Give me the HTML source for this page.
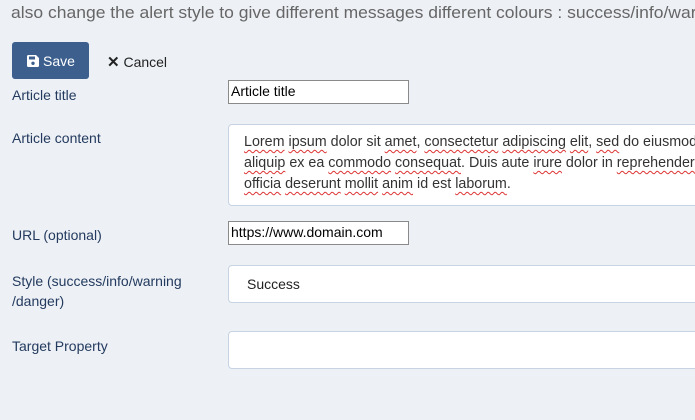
<!DOCTYPE html>
<html><head><style>
body{margin:0;width:695px;height:420px;overflow:hidden;background:#edf1f6;font-family:"Liberation Sans",sans-serif;position:relative}
.a{position:absolute;white-space:nowrap}
.top{left:11px;top:3px;font-size:17px;color:#666;transform-origin:0 0;transform:scaleX(1.03)}
.lbl{font-size:14px;color:#233a5e;left:12px}
.btn{left:12px;top:42px;width:77px;height:37px;background:#3c5f8d;border-radius:3px;color:#fff;font-size:14px}
.inp{background:#fff;border:1px solid #8a8a8a;font-size:14px;color:#000;padding-left:2px;box-sizing:border-box;line-height:21px}
.box{background:#fff;border:1px solid #c7d3e3;border-radius:4px;box-sizing:border-box}
.w{text-decoration:underline wavy #d33;text-decoration-thickness:1px;text-underline-offset:3px}
</style></head><body>
<div class="a top">also change the alert style to give different messages different colours : success/info/warning/danger</div>
<div class="a btn"><svg style="position:absolute;left:15px;top:13px" width="12" height="12" viewBox="0 0 12 12"><path d="M0 1.5A1.5 1.5 0 0 1 1.5 0H9l3 3v7.5A1.5 1.5 0 0 1 10.5 12h-9A1.5 1.5 0 0 1 0 10.5z" fill="#fff"/><rect x="2" y="1.5" width="6" height="3" fill="#3c5f8d"/><circle cx="6" cy="8.3" r="1.7" fill="#3c5f8d"/></svg><span style="position:absolute;left:31px;top:11px">Save</span></div>
<div class="a" style="left:107px;top:53px;font-size:14px;color:#222"><b style="font-size:15px">✕</b> Cancel</div>
<div class="a lbl" style="top:87px">Article title</div>
<div class="a inp" style="left:228px;top:80px;width:181px;height:24px">Article title</div>
<div class="a lbl" style="top:130px">Article content</div>
<div class="a box" style="left:228px;top:124px;width:480px;height:82px;font-size:14.3px;color:#333;line-height:21px;padding:7px 0 0 15px;overflow:hidden">
<span class="w">Lorem</span> <span class="w">ipsum</span> dolor sit <span class="w">amet</span>, <span class="w">consectetur</span> <span class="w">adipiscing</span> <span class="w">elit</span>, <span class="w">sed</span> do eiusmod<br>
<span class="w">aliquip</span> ex ea <span class="w">commodo</span> <span class="w">consequat</span>. Duis aute <span class="w">irure</span> dolor in <span class="w">reprehenderit</span><br>
<span class="w">officia</span> <span class="w">deserunt</span> <span class="w">mollit</span> <span class="w">anim</span> id est <span class="w">laborum</span>.</div>
<div class="a lbl" style="top:227px">URL (optional)</div>
<div class="a inp" style="left:228px;top:221px;width:181px;height:24px">https://www.domain.com</div>
<div class="a lbl" style="top:271px;line-height:20px">Style (success/info/warning<br>/danger)</div>
<div class="a box" style="left:228px;top:265px;width:480px;height:38px"><span style="position:absolute;left:18px;top:10px;font-size:14px;color:#222">Success</span></div>
<div class="a lbl" style="top:338px">Target Property</div>
<div class="a box" style="left:228px;top:331px;width:480px;height:38px"></div>
</body></html>
